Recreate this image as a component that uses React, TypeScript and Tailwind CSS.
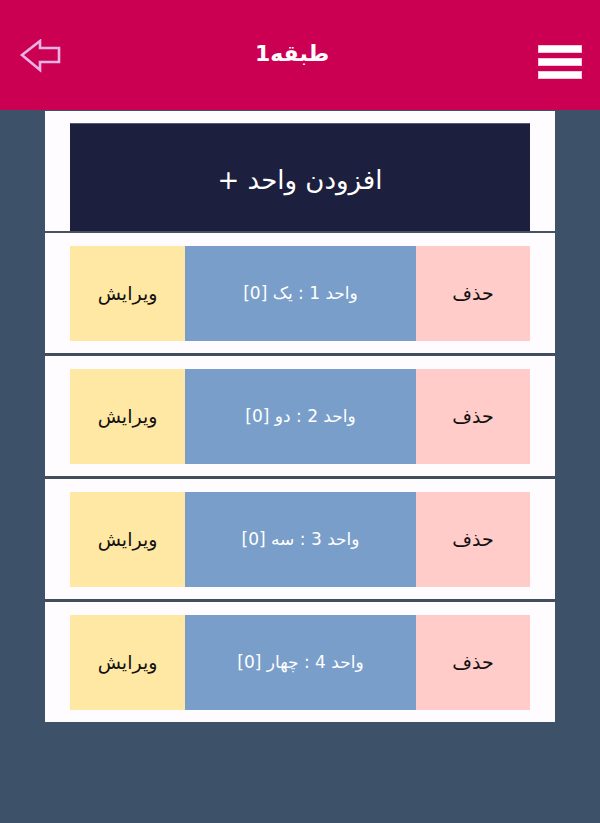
import React from "react";

interface Unit {
  id: number;
  name: string;
  count: number;
}

const units: Unit[] = [
  { id: 1, name: "یک", count: 0 },
  { id: 2, name: "دو", count: 0 },
  { id: 3, name: "سه", count: 0 },
  { id: 4, name: "چهار", count: 0 },
];

const BackArrow: React.FC = () => (
  <svg width="44" height="36" viewBox="0 0 44 36" className="block">
    <polygon
      points="4,16 22,2 22,9 41,9 41,23 22,23 22,31"
      fill="none"
      stroke="#e8b2e2"
      strokeWidth="2.6"
      strokeLinejoin="miter"
    />
  </svg>
);

const UnitRow: React.FC<{ unit: Unit }> = ({ unit }) => (
  <div className="bg-[#fffcff] h-[120px] pt-[13px] px-[25px]">
    <div className="flex h-[95px]">
      <button className="w-[114px] bg-[#ffccc9] flex items-center justify-center text-[19px] text-[#111]">
        حذف
      </button>
      <div className="flex-1 bg-[#789ec9] flex items-center justify-center text-[17px] text-white">
        واحد {unit.id} : {unit.name} [{unit.count}]
      </div>
      <button className="w-[115px] bg-[#ffe8a4] flex items-center justify-center text-[19px] text-[#111]">
        ویرایش
      </button>
    </div>
  </div>
);

const App: React.FC = () => {
  return (
    <div
      dir="rtl"
      className="min-h-[823px] bg-[#3d5168]"
      style={{ fontFamily: '"DejaVu Sans", "Noto Sans", sans-serif' }}
    >
      {/* header */}
      <div className="h-[110px] bg-[#cc0053] flex items-center justify-between pl-[18px] pr-[18px]">
        <div className="flex flex-col gap-[5px] w-[44px] mt-[14px]">
          <span className="block h-[8px] bg-white border border-[#f7c8dc]" />
          <span className="block h-[8px] bg-white border border-[#f7c8dc]" />
          <span className="block h-[8px] bg-white border border-[#f7c8dc]" />
        </div>
        <h1 className="text-white font-bold text-[22px] -mt-[3px] mr-[16px]">طبقه1</h1>
        <div className="mt-[4px]">
          <BackArrow />
        </div>
      </div>

      {/* list panel */}
      <div className="w-[510px] mx-auto mt-[1px] bg-[#434e5d]">
        <div className="bg-[#fffcff] pt-[12px] px-[25px] border-b-2 border-[#4a5160]">
          <button className="w-full h-[108px] bg-[#1c1f3d] text-white text-[26px] pt-[6px] flex items-center justify-center border-t border-[#555a70]">
            افزودن واحد +
          </button>
        </div>
        <div className="flex flex-col gap-[3px]">
          {units.map((u) => (
            <UnitRow key={u.id} unit={u} />
          ))}
        </div>
      </div>
    </div>
  );
};

export default App;
